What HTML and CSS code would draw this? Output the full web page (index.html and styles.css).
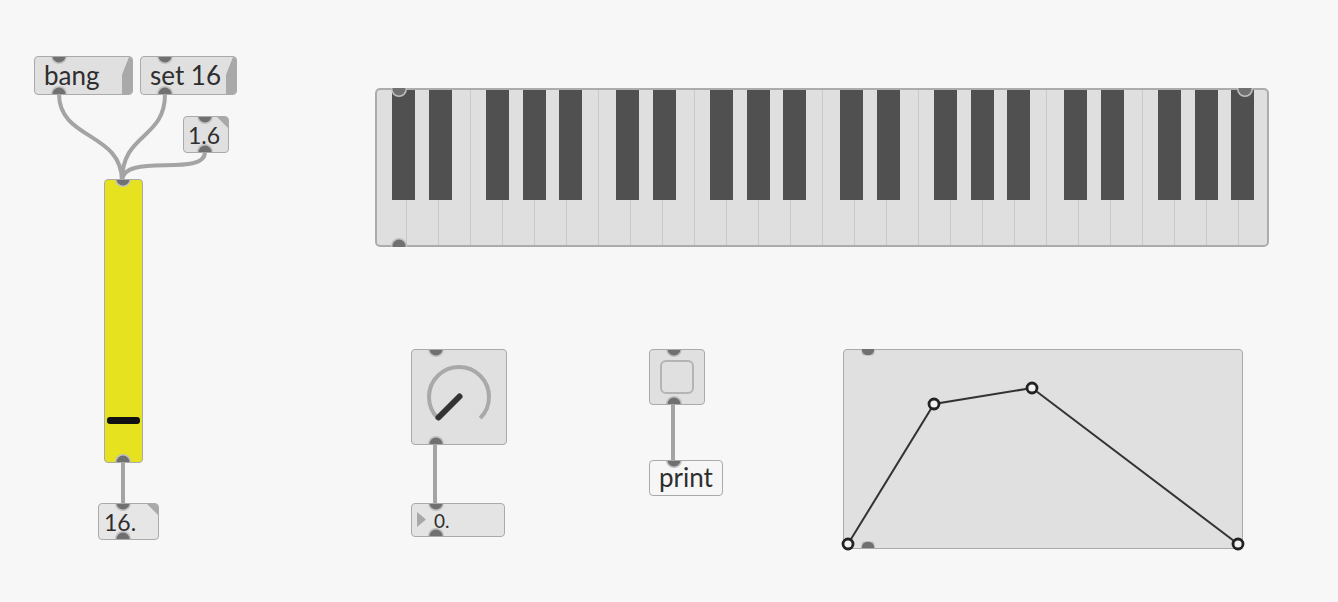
FILE: index.html
```html
<!DOCTYPE html>
<html lang="en">

<head>
    <meta charset="UTF-8">
    <title>patcher</title>
    <link rel="stylesheet" href="styles.css">
</head>

<body>
    <div class="patcher">
        <!-- patch cords -->
        <svg class="cords" width="1338" height="602">
            <path d="M59 94 C59 140, 122 132, 122 181" />
            <path d="M165 94 C165 140, 122 132, 122 181" />
            <path d="M205 152 C205 178, 122 152, 122 181" />
            <path d="M123 461 L123 505" />
            <path d="M435 444 L435 505" />
            <path d="M673 403 L673 460" />
        </svg>

        <!-- left column -->
        <div class="obj msg msg-bang">
            <span class="port in"></span>
            <span class="label">bang</span>
            <span class="flag"></span>
            <span class="port out"></span>
        </div>
        <div class="obj msg msg-set">
            <span class="port in"></span>
            <span class="label">set 16</span>
            <span class="flag"></span>
            <span class="port out"></span>
        </div>
        <div class="obj num num-small">
            <span class="port in"></span>
            <span class="label">1.6</span>
            <span class="corner"></span>
            <span class="port out"></span>
        </div>
        <div class="obj slider">
            <span class="port in"></span>
            <span class="thumb"></span>
            <span class="port out"></span>
        </div>
        <div class="obj num num-out">
            <span class="port in"></span>
            <span class="label">16.</span>
            <span class="corner"></span>
            <span class="port out"></span>
        </div>

        <!-- keyboard -->
        <div class="obj kslider">
            <div class="octave">
                <i class="white"></i><i class="white"></i><i class="white"></i><i class="white"></i><i class="white"></i><i class="white"></i><i class="white"></i>
                <b class="black k1"></b><b class="black k2"></b><b class="black k3"></b><b class="black k4"></b><b class="black k5"></b>
            </div>
            <div class="octave">
                <i class="white"></i><i class="white"></i><i class="white"></i><i class="white"></i><i class="white"></i><i class="white"></i><i class="white"></i>
                <b class="black k1"></b><b class="black k2"></b><b class="black k3"></b><b class="black k4"></b><b class="black k5"></b>
            </div>
            <div class="octave">
                <i class="white"></i><i class="white"></i><i class="white"></i><i class="white"></i><i class="white"></i><i class="white"></i><i class="white"></i>
                <b class="black k1"></b><b class="black k2"></b><b class="black k3"></b><b class="black k4"></b><b class="black k5"></b>
            </div>
            <div class="octave">
                <i class="white"></i><i class="white"></i><i class="white"></i><i class="white"></i><i class="white"></i><i class="white"></i><i class="white"></i>
                <b class="black k1"></b><b class="black k2"></b><b class="black k3"></b><b class="black k4"></b><b class="black k5"></b>
            </div>
            <span class="port in"></span>
            <span class="port in in-right"></span>
            <span class="port out"></span>
        </div>

        <!-- dial -->
        <div class="obj dial">
            <span class="port in"></span>
            <svg width="96" height="96" viewBox="0 0 96 96">
                <path class="dial-arc" d="M26.8 69.2 A30 30 0 1 1 69.2 69.2" />
                <path class="dial-needle" d="M48.5 47.5 L27.5 68.5" />
            </svg>
            <span class="port out"></span>
        </div>
        <div class="obj num num-dial">
            <span class="port in"></span>
            <span class="arrow"></span>
            <span class="label">0.</span>
            <span class="port out"></span>
        </div>

        <!-- toggle -->
        <div class="obj toggle">
            <span class="port in"></span>
            <span class="check"></span>
            <span class="port out"></span>
        </div>
        <div class="obj print">
            <span class="port in"></span>
            <span class="label">print</span>
        </div>

        <!-- function -->
        <div class="obj function">
            <span class="port in"></span>
            <svg width="400" height="200" viewBox="0 0 400 200">
                <polyline points="5,195 91,55 189,39 395,195" />
                <circle cx="5" cy="195" r="5" />
                <circle cx="91" cy="55" r="5" />
                <circle cx="189" cy="39" r="5" />
                <circle cx="395" cy="195" r="5" />
            </svg>
            <span class="port out"></span>
        </div>
    </div>
</body>

</html>
```

FILE: styles.css
```css
body {
    margin: 0;
    background-color: #f7f7f7;
    font-family: Lato, "Noto Sans", sans-serif;
    color: #2e2e2e;
}

.patcher {
    position: relative;
    width: 1338px;
    height: 602px;
    overflow: hidden;
}

.cords {
    position: absolute;
    left: 0;
    top: 0;
}

.cords path {
    fill: none;
    stroke: #a4a4a4;
    stroke-width: 4;
    stroke-linecap: round;
}

/* boxes */
.obj {
    position: absolute;
    box-sizing: border-box;
    border: 1.5px solid #aaaaaa;
    border-radius: 4px;
    background-color: #e0e0e0;
    overflow: hidden;
}

.port {
    position: absolute;
    left: 24px;
    width: 13px;
    height: 13px;
    border-radius: 50%;
    background-color: #707070;
    box-shadow: 0 0 0 1.5px #c0c0c0;
    transform: translate(-50%, -50%);
    z-index: 2;
}

.port.in {
    top: -1px;
}

.port.out {
    top: 100%;
}

.label {
    display: block;
    white-space: nowrap;
}

/* message boxes */
.msg {
    display: flex;
    align-items: center;
    height: 39px;
    padding-left: 9px;
    padding-bottom: 2px;
    font-size: 26px;
}

.msg-bang {
    left: 34px;
    top: 56px;
    width: 99px;
}

.msg-set {
    left: 140px;
    top: 56px;
    width: 97px;
}

.flag {
    position: absolute;
    right: 0;
    top: 0;
    bottom: 0;
    width: 10px;
    background-color: #a9a9a9;
    clip-path: polygon(70% 0, 100% 0, 100% 100%, 0 100%, 0 48%);
}

/* number boxes */
.num {
    display: flex;
    align-items: center;
    font-size: 23px;
}

.corner {
    position: absolute;
    right: 0;
    top: 0;
    width: 11px;
    height: 11px;
    background-color: #a9a9a9;
    clip-path: polygon(0 0, 100% 0, 100% 100%);
}

.num-small {
    left: 183px;
    top: 116px;
    width: 46px;
    height: 37px;
    padding-left: 4px;
}

.num-small .port {
    left: 21px;
}

.num-out {
    left: 98px;
    top: 503px;
    width: 61px;
    height: 37px;
    padding-left: 5px;
    background-color: #e6e6e6;
}

.num-dial {
    left: 411px;
    top: 503px;
    width: 94px;
    height: 34px;
    padding-left: 22px;
    font-size: 19px;
    background-color: #e4e4e4;
}

.arrow {
    position: absolute;
    left: 5px;
    top: 8px;
    width: 9px;
    height: 15px;
    background-color: #a8a8a8;
    clip-path: polygon(0 0, 100% 50%, 0 100%);
}

/* slider */
.slider {
    left: 104px;
    top: 179px;
    width: 39px;
    height: 284px;
    background-color: #e6e21f;
}

.slider .port {
    left: 18px;
}

.thumb {
    position: absolute;
    left: 2px;
    right: 2px;
    top: 237px;
    height: 7px;
    border-radius: 3px;
    background-color: #111;
}

/* keyboard */
.kslider {
    display: flex;
    left: 375px;
    top: 88px;
    width: 894px;
    height: 159px;
    border: none;
    border-radius: 5px;
}

.kslider::after {
    content: "";
    position: absolute;
    inset: 0;
    border: 2px solid #acacac;
    border-radius: 5px;
    pointer-events: none;
}

.octave {
    position: relative;
    display: flex;
    flex: none;
    width: 224px;
}

.white {
    flex: none;
    box-sizing: border-box;
    width: 32px;
    border-right: 1.5px solid #c9c9c9;
    background-color: #dfdfdf;
}

.black {
    position: absolute;
    top: 0;
    width: 23px;
    height: 112px;
    background-color: #505050;
}

.k1 { left: 17px; }
.k2 { left: 54px; }
.k3 { left: 111px; }
.k4 { left: 148px; }
.k5 { left: 184px; }

.kslider .port.in {
    top: 1px;
}

.kslider .in-right {
    left: 870px;
}

.kslider .port.out {
    top: calc(100% - 1px);
}

/* dial */
.dial {
    left: 411px;
    top: 349px;
    width: 96px;
    height: 96px;
}

.dial svg {
    position: absolute;
    left: -1.5px;
    top: -1.5px;
}

.dial-arc {
    fill: none;
    stroke: #a9a9a9;
    stroke-width: 4;
}

.dial-needle {
    stroke: #333;
    stroke-width: 6;
    stroke-linecap: round;
}

/* toggle + print */
.toggle {
    display: flex;
    align-items: center;
    justify-content: center;
    left: 649px;
    top: 349px;
    width: 56px;
    height: 56px;
}

.check {
    box-sizing: border-box;
    width: 34px;
    height: 34px;
    border: 2px solid #b4b4b4;
    border-radius: 6px;
}

.print {
    display: flex;
    align-items: center;
    left: 649px;
    top: 460px;
    width: 74px;
    height: 36px;
    padding-left: 9px;
    padding-bottom: 2px;
    background-color: #f6f6f6;
    font-size: 26px;
}

/* function: points may sit on the edge, so only the ports are cut in half */
.function {
    left: 843px;
    top: 349px;
    width: 400px;
    height: 200px;
    overflow: visible;
}

.function .port.in {
    clip-path: inset(50% 0 0 0);
}

.function .port.out {
    clip-path: inset(0 0 50% 0);
}

.function svg {
    position: absolute;
    left: -1.5px;
    top: -1.5px;
    overflow: visible;
}

.function polyline {
    fill: none;
    stroke: #333;
    stroke-width: 2;
}

.function circle {
    fill: #f2f2f2;
    stroke: #222;
    stroke-width: 2.8;
}
```
